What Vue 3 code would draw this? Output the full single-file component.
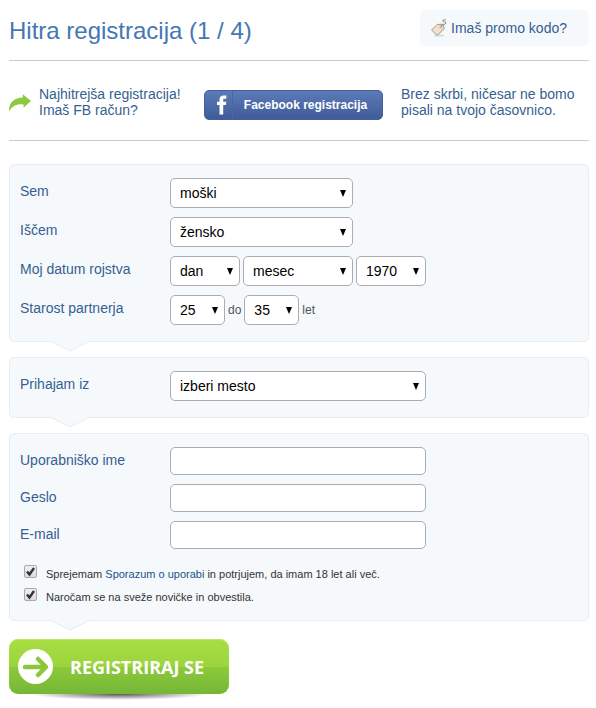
<template>
  <main class="registration">
    <header class="top">
      <h1>Hitra registracija (1 / 4)</h1>
      <a href="#" class="promo">
        <svg width="16" height="18" viewBox="0 0 16 18" aria-hidden="true">
          <path d="M4 16.500h8" stroke="#dcdcdc" stroke-width="2" stroke-linecap="round" />
          <path d="M.6 11 6.300 5.500l5.500-.3 1.500 4.500-7.200 6.700z" fill="#f0e0cc" stroke="#a5968a" stroke-linejoin="round" />
          <circle cx="9.800" cy="7.900" r="1" fill="#fff" stroke="#8d8580" stroke-width=".6" />
          <path d="M9.900 7.600c.6-3 5-1.300 5-3.800 0-1.500-3.400-.5-3.100-2 .2-1 1.700-1.300 3-1" fill="none" stroke="#8d8580" />
        </svg>
        <span>Imaš promo kodo?</span>
      </a>
    </header>

    <section class="facebook">
      <svg class="share" width="22" height="18" viewBox="0 0 22 18" aria-hidden="true">
        <path d="M.2 17.500C-.8 9.500 5 3.600 13.800 3.600V.3L22 7l-7.500 6.700v-3.200C8.500 9.500 3 12 .2 17.500z" fill="#8cc940" />
      </svg>
      <p>Najhitrejša registracija!<br>Imaš FB račun?</p>
      <button type="button" class="fb-btn">
        <span class="fb-logo">
          <svg width="10" height="20" viewBox="0 0 10 20" aria-hidden="true">
            <path d="M2.500 19.500V10H0V6.700h2.500V4.600C2.500 1.900 4 .5 6.700.5h2.600v3.200H7.600c-1.100 0-1.400.5-1.400 1.400v1.600h3.100L8.900 10H6.200v9.500z" fill="#fff" />
          </svg>
        </span>
        <span class="fb-text">Facebook registracija</span>
      </button>
      <p class="note">Brez skrbi, ničesar ne bomo pisali na tvojo časovnico.</p>
    </section>

    <form @submit.prevent>
      <div class="panel">
        <div class="row">
          <label for="gender">Sem</label>
          <select id="gender" v-model="form.gender" class="medium">
            <option>moški</option>
            <option>ženska</option>
          </select>
        </div>
        <div class="row">
          <label for="seeking">Iščem</label>
          <select id="seeking" v-model="form.seeking" class="medium">
            <option>žensko</option>
            <option>moškega</option>
          </select>
        </div>
        <div class="row">
          <label for="day">Moj datum rojstva</label>
          <div class="fields">
            <select id="day" v-model="form.day" class="small">
              <option>dan</option>
              <option v-for="d in 31" :key="d">{{ d }}</option>
            </select>
            <select v-model="form.month" class="month" aria-label="mesec">
              <option>mesec</option>
              <option v-for="m in 12" :key="m">{{ m }}</option>
            </select>
            <select v-model="form.year" class="small" aria-label="leto">
              <option v-for="y in years" :key="y">{{ y }}</option>
            </select>
          </div>
        </div>
        <div class="row">
          <label for="age-from">Starost partnerja</label>
          <div class="fields">
            <select id="age-from" v-model="form.ageFrom" class="age">
              <option v-for="a in ages" :key="a">{{ a }}</option>
            </select>
            <label for="age-to" class="unit">do</label>
            <select id="age-to" v-model="form.ageTo" class="age">
              <option v-for="a in ages" :key="a">{{ a }}</option>
            </select>
            <span class="unit">let</span>
          </div>
        </div>
        <svg class="notch" width="40" height="11" viewBox="0 0 40 11" aria-hidden="true">
          <path d="M0 0 20 10 40 0" />
        </svg>
      </div>

      <div class="panel">
        <div class="row">
          <label for="city">Prihajam iz</label>
          <select id="city" v-model="form.city" class="wide">
            <option>izberi mesto</option>
            <option>Ljubljana</option>
            <option>Maribor</option>
          </select>
        </div>
        <svg class="notch" width="40" height="11" viewBox="0 0 40 11" aria-hidden="true">
          <path d="M0 0 20 10 40 0" />
        </svg>
      </div>

      <div class="panel">
        <div v-for="f in accountFields" :key="f.id" class="row">
          <label :for="f.id">{{ f.label }}</label>
          <input :id="f.id" v-model="form[f.id]" :type="f.type" class="wide">
        </div>
        <div class="checks">
          <div class="check">
            <input id="terms" v-model="form.terms" type="checkbox">
            <label for="terms">Sprejemam <a href="#">Sporazum o uporabi</a> in potrjujem, da imam 18 let ali več.</label>
          </div>
          <div class="check">
            <input id="news" v-model="form.news" type="checkbox">
            <label for="news">Naročam se na sveže novičke in obvestila.</label>
          </div>
        </div>
        <svg class="notch" width="40" height="11" viewBox="0 0 40 11" aria-hidden="true">
          <path d="M0 0 20 10 40 0" />
        </svg>
      </div>

      <button type="submit" class="submit">
        <svg width="36" height="36" viewBox="0 0 36 36" aria-hidden="true">
          <circle cx="17.500" cy="17.500" r="17.500" fill="#fff" />
          <path d="M7 18h20M20 10l8 8-8 8" fill="none" stroke="#8cc739" stroke-width="4.500" stroke-linecap="round" stroke-linejoin="round" />
        </svg>
        <span>REGISTRIRAJ SE</span>
      </button>
    </form>
  </main>
</template>

<script setup>
import { reactive } from 'vue';

const form = reactive({
  gender: 'moški',
  seeking: 'žensko',
  day: 'dan',
  month: 'mesec',
  year: 1970,
  ageFrom: 25,
  ageTo: 35,
  city: 'izberi mesto',
  username: '',
  password: '',
  email: '',
  terms: true,
  news: true
});

const accountFields = [
  { id: 'username', label: 'Uporabniško ime', type: 'text' },
  { id: 'password', label: 'Geslo', type: 'password' },
  { id: 'email', label: 'E-mail', type: 'email' }
];

const years = Array.from({ length: 60 }, (_, i) => 1940 + i);
const ages = Array.from({ length: 63 }, (_, i) => 18 + i);
</script>

<style>
body {
  margin: 0;
  background: #fff;
}
</style>

<style scoped>
.registration {
  padding: 10px 7px 14px 9px;
  font-family: Arial, 'Liberation Sans', sans-serif;
  font-size: 14px;
  line-height: 16px;
  color: #365f91;
}

.registration * {
  box-sizing: border-box;
}

.top {
  display: flex;
  justify-content: space-between;
  align-items: flex-start;
  height: 51px;
  border-bottom: 1px solid #ccc;
}

h1 {
  margin: 0;
  font-size: 24px;
  font-weight: normal;
  line-height: 42px;
  color: #4478b2;
}

.promo {
  display: flex;
  align-items: center;
  gap: 4px;
  height: 36px;
  padding: 0 22px 0 11px;
  border-radius: 5px;
  background: #f5f9fc;
  color: #365f91;
  text-decoration: none;
}

.facebook {
  display: grid;
  grid-template-columns: 30px 1fr 179px 206px;
  align-items: start;
  margin-bottom: 23px;
  padding: 25px 0 20px;
  border-bottom: 1px solid #ccc;
}

.facebook p {
  margin: 0;
}

.facebook .note {
  padding-left: 18px;
}

.share {
  margin-top: 8px;
}

.fb-btn {
  display: flex;
  height: 30px;
  margin-top: 4px;
  padding: 0;
  border: 1px solid #43609c;
  border-radius: 5px;
  background: linear-gradient(#5c7ab8, #3f5c98);
  color: #fff;
  font-family: inherit;
  font-size: 12px;
  font-weight: bold;
  line-height: 28px;
  cursor: pointer;
}

.fb-logo {
  display: flex;
  align-items: center;
  justify-content: flex-end;
  width: 28px;
  height: 28px;
  padding-right: 5px;
  border-right: 1px solid #4a67a3;
}

.fb-text {
  flex: 1;
  padding-right: 4px;
  text-align: center;
}

.panel {
  position: relative;
  margin-bottom: 15px;
  padding: 13px 10px 16px;
  border: 1px solid #e6edf3;
  border-radius: 5px;
  background: #f5f9fc;
}

.row {
  display: flex;
  align-items: flex-start;
}

.row + .row {
  margin-top: 9px;
}

.row > label {
  width: 150px;
  line-height: 26px;
}

.fields {
  display: flex;
  align-items: center;
  gap: 3px;
}

select,
.row input {
  border: 1px solid #a9adb2;
  border-radius: 5px;
  background-color: #fff;
  color: #000;
  font-family: inherit;
  font-size: 14px;
}

select {
  appearance: none;
  height: 30px;
  padding: 0 18px 0 9px;
  background-image: url("data:image/svg+xml,%3Csvg xmlns='http://www.w3.org/2000/svg' width='6' height='7'%3E%3Cpath d='M0 0h6L3 7z'/%3E%3C/svg%3E");
  background-repeat: no-repeat;
  background-position: right 6px top 11px;
}

.row input {
  height: 28px;
  padding: 0 9px;
}

.medium {
  width: 183px;
}

.small {
  width: 70px;
}

.month {
  width: 110px;
}

.age {
  width: 55px;
}

.wide {
  width: 256px;
}

.unit {
  font-size: 12px;
  color: #4c5560;
}

.checks {
  display: flex;
  flex-direction: column;
  gap: 7px;
  padding: 16px 0 0 4px;
}

.check {
  display: flex;
  align-items: flex-start;
  gap: 9px;
  height: 16px;
  font-size: 11px;
  color: #333;
}

.check label {
  line-height: 18px;
}

.check a {
  color: #23508c;
  text-decoration: none;
}

.check input {
  appearance: none;
  flex: none;
  width: 13px;
  height: 13px;
  margin: 0;
  border: 1px solid #a8a8a8;
  border-radius: 2px;
  background: linear-gradient(#efefef, #dcdcdc);
}

.check input:checked {
  background-image: url("data:image/svg+xml,%3Csvg xmlns='http://www.w3.org/2000/svg' width='11' height='11'%3E%3Cpath d='M2 5.500l2.500 3L9 2' fill='none' stroke='%23333' stroke-width='2.400'/%3E%3C/svg%3E"), linear-gradient(#efefef, #dcdcdc);
}

/* pointer under each panel */
.notch {
  position: absolute;
  top: 100%;
  left: 40px;
  overflow: visible;
  fill: #f5f9fc;
  stroke: #e6edf3;
}

.submit {
  position: relative;
  display: flex;
  align-items: center;
  gap: 16px;
  width: 220px;
  height: 55px;
  margin-top: 18px;
  padding: 0 9px;
  border: 0;
  border-radius: 9px;
  background: linear-gradient(#a9de42, #9bd43d 50%, #8cca3a 51%, #76b637);
  box-shadow: inset 0 1px 1px #bce85f;
  color: #fff;
  font-family: 'Open Sans', sans-serif;
  font-size: 18px;
  font-weight: bold;
  cursor: pointer;
}

.submit::after {
  content: '';
  position: absolute;
  z-index: -1;
  right: 22px;
  bottom: -6px;
  left: 22px;
  height: 12px;
  border-radius: 50%;
  background: radial-gradient(closest-side, #555, transparent);
}
</style>
